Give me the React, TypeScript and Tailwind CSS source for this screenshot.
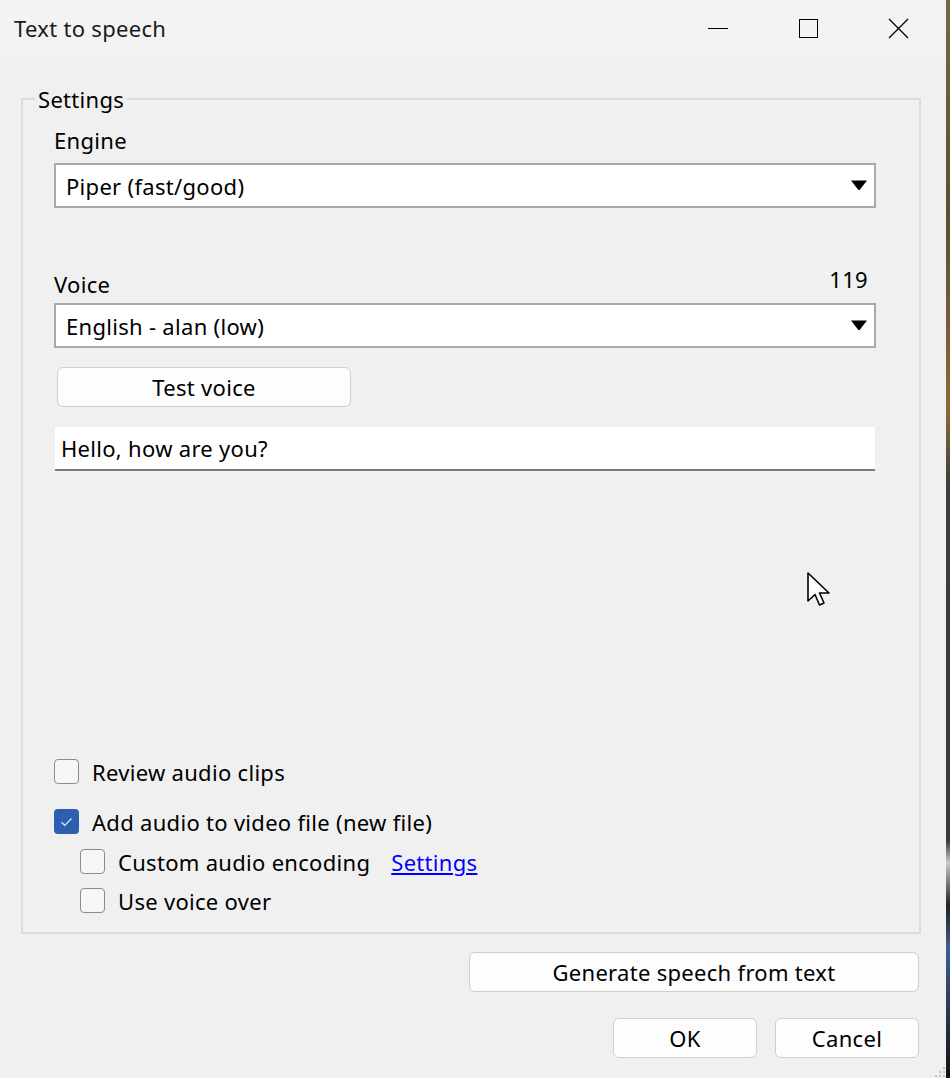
import React from "react";

const font = { fontFamily: '"Noto Sans", "Open Sans", sans-serif' };
const txt = "text-[22px] leading-[24px] tracking-[0.3px]";

function Combo({ text }: { text: string }) {
  return (
    <div className="flex h-[45px] w-[822px] items-center justify-between border-2 border-[#a9a9a9] bg-white pl-[10px] pr-[7px]">
      <span className={`${txt} text-black`}>{text}</span>
      <svg width="16" height="11" viewBox="0 0 16 11">
        <path d="M0 0.5 L16 0.5 L8.6 10 L7.4 10 Z" fill="#000" />
      </svg>
    </div>
  );
}

function Check({ checked = false }: { checked?: boolean }) {
  return checked ? (
    <div className="flex h-[25px] w-[25px] items-center justify-center rounded-[4px] bg-[#2d5fb0]">
      <svg width="13" height="10" viewBox="0 0 13 10">
        <path d="M1.5 5.2 L4.8 8.3 L11.5 1.5" fill="none" stroke="#dfe8f7" strokeWidth="1.2" />
      </svg>
    </div>
  ) : (
    <div className="h-[25px] w-[25px] rounded-[4px] border-[1.5px] border-[#8c8c8c] bg-[#f6f6f6]" />
  );
}

function Btn({ children, cls }: { children: React.ReactNode; cls: string }) {
  return (
    <div
      className={`flex h-[40px] items-center justify-center rounded-[6px] border border-[#cfcfcf] bg-[#fdfdfd] ${txt} text-black ${cls}`}
    >
      {children}
    </div>
  );
}

export default function App() {
  return (
    <div className="flex h-[1078px] w-[950px] overflow-hidden" style={font}>
      <div className="relative flex w-[946px] flex-col bg-[#f0f0f0]">
        {/* Title bar */}
        <div className="flex h-[56px] items-center bg-[#f3f3f3]">
          <span className={`ml-[14px] ${txt} text-[#1a1a1a]`}>Text to speech</span>
          <div className="ml-auto flex items-center">
            <div className="flex w-[90px] justify-center">
              <div className="h-[1px] w-[20px] bg-black" />
            </div>
            <div className="flex w-[90px] justify-center">
              <div className="h-[19px] w-[19px] border-[1.5px] border-black" />
            </div>
            <div className="mr-[3px] flex w-[90px] justify-center">
              <svg width="21" height="21" viewBox="0 0 21 21">
                <path d="M1 1 L20 20 M20 1 L1 20" stroke="#000" strokeWidth="1.3" />
              </svg>
            </div>
          </div>
        </div>

        {/* Group box */}
        <fieldset className="ml-[21px] mt-[31px] w-[900px] border-2 border-[#dcdcdc] pb-[19px] pl-[12px] pr-[43px]">
          <legend className={`px-[3px] ${txt} text-black`}>Settings</legend>
          <div className="flex flex-col pl-[19px]">
            <div className={`mt-[17px] ${txt} text-black`}>Engine</div>
            <div className="mt-[11px]">
              <Combo text="Piper (fast/good)" />
            </div>
            <div className="mt-[59px] flex items-start justify-between">
              <span className={`mt-[5px] ${txt} text-black`}>Voice</span>
              <span className={`mr-[8px] ${txt} text-black`}>119</span>
            </div>
            <div className="mt-[7px]">
              <Combo text="English - alan (low)" />
            </div>
            <Btn cls="ml-[3px] mt-[19px] w-[294px]">Test voice</Btn>
            <div
              className={`ml-[1px] mt-[20px] flex h-[44px] w-[820px] items-center border-b-2 border-[#7a7a7a] bg-white pl-[6px] ${txt} text-black`}
            >
              Hello, how are you?
            </div>

            <div className="mt-[288px] flex items-center gap-[13px]">
              <Check />
              <span className={`${txt} text-black`}>Review audio clips</span>
            </div>
            <div className="mt-[25px] flex items-center gap-[13px]">
              <Check checked />
              <span className={`${txt} text-black`}>Add audio to video file (new file)</span>
            </div>
            <div className="ml-[26px] mt-[15px] flex items-center gap-[13px]">
              <Check />
              <span className={`${txt} text-black`}>Custom audio encoding</span>
              <span className={`ml-[8px] ${txt} text-[#0000ff] underline`}>Settings</span>
            </div>
            <div className="ml-[26px] mt-[14px] flex items-center gap-[13px]">
              <Check />
              <span className={`${txt} text-black`}>Use voice over</span>
            </div>
          </div>
        </fieldset>

        <div className="mr-[27px] mt-[18px] flex justify-end">
          <Btn cls="w-[450px]">Generate speech from text</Btn>
        </div>
        <div className="mr-[27px] mt-[26px] flex justify-end gap-[18px]">
          <Btn cls="w-[144px]">OK</Btn>
          <Btn cls="w-[144px]">Cancel</Btn>
        </div>

        {/* mouse cursor */}
        <svg className="absolute left-[807px] top-[572px]" width="26" height="40" viewBox="0 0 26 40">
          <path
            d="M1 1 L1 29 L8 22.5 L12.5 33 L17 31 L12.5 21 L22 21 Z"
            fill="#fff"
            stroke="#000"
            strokeWidth="1.6"
            strokeLinejoin="round"
          />
        </svg>

        {/* resize grip */}
        <svg className="absolute bottom-0 right-0" width="12" height="12" viewBox="0 0 12 12">
          <rect x="9" y="1" width="2" height="2" fill="#c4c4c4" />
          <rect x="5" y="5" width="2" height="2" fill="#c4c4c4" />
          <rect x="9" y="5" width="2" height="2" fill="#c4c4c4" />
          <rect x="1" y="9" width="2" height="2" fill="#c4c4c4" />
          <rect x="5" y="9" width="2" height="2" fill="#c4c4c4" />
          <rect x="9" y="9" width="2" height="2" fill="#c4c4c4" />
        </svg>
      </div>
      <div className="w-[4px] bg-[linear-gradient(to_bottom,#7a6440_0%,#5e4c33_20%,#8a6a3a_38%,#3d3d3d_45%,#3a3a3a_78%,#c8c8c8_80%,#222_84%,#3f5d8f_88%,#111_100%)]" />
    </div>
  );
}
